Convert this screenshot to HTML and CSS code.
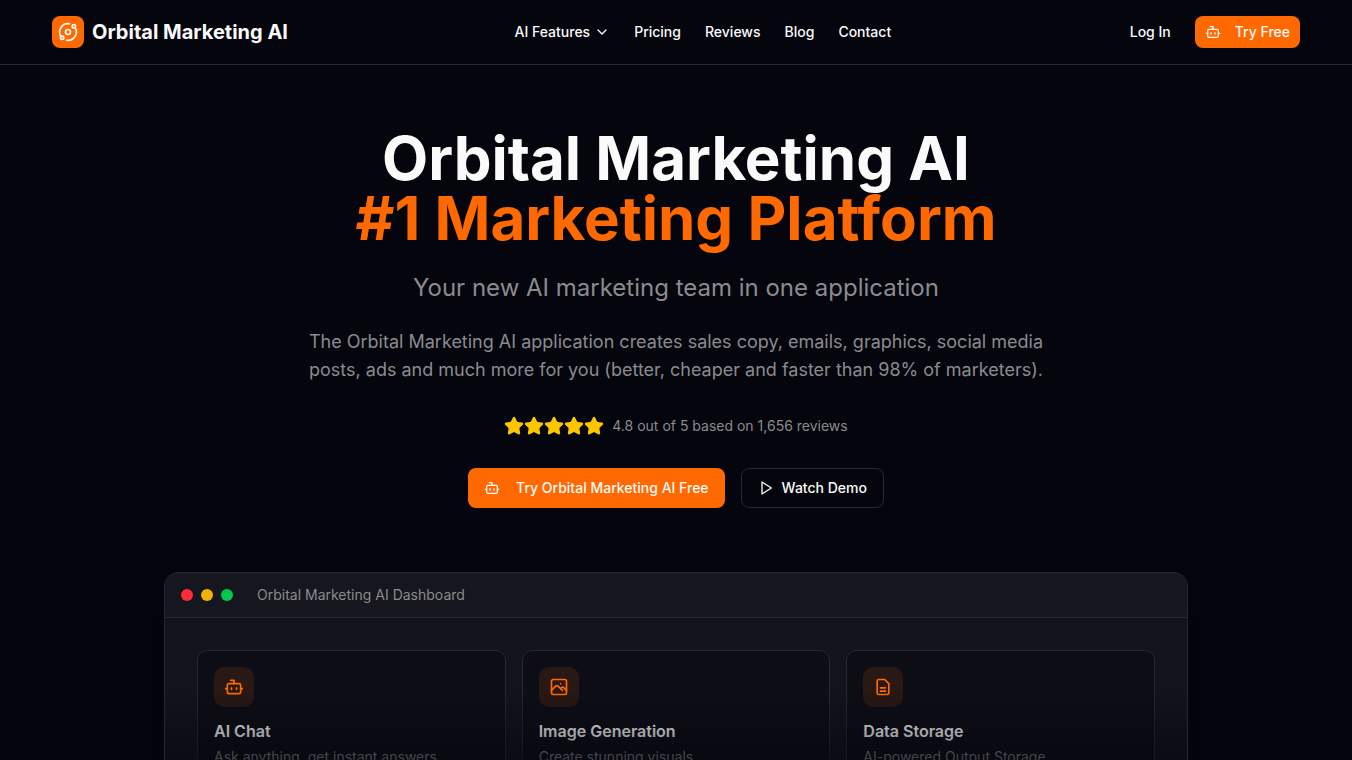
FILE: index.html
```
<!DOCTYPE html>
<html lang="en">
<head>
    <meta charset="UTF-8">
    <meta name="viewport" content="width=device-width, initial-scale=1.0">
    <title>Orbital Marketing AI</title>
    <link rel="stylesheet" href="styles.css">
</head>
<body>
    <svg class="sprite" aria-hidden="true">
        <symbol id="icon-bot" viewBox="0 0 24 24">
            <path d="M12 8V4H8"/>
            <rect width="16" height="12" x="4" y="8" rx="2"/>
            <path d="M2 14h2M20 14h2M15 13v2M9 13v2"/>
        </symbol>
        <symbol id="icon-star" viewBox="0 0 24 24">
            <path d="M11.525 2.295a.53.53 0 0 1 .95 0l2.31 4.679a2.123 2.123 0 0 0 1.595 1.16l5.166.756a.53.53 0 0 1 .294.904l-3.736 3.638a2.123 2.123 0 0 0-.611 1.878l.882 5.14a.53.53 0 0 1-.771.56l-4.618-2.428a2.122 2.122 0 0 0-1.973 0L6.396 21.01a.53.53 0 0 1-.77-.56l.881-5.139a2.122 2.122 0 0 0-.611-1.879L2.16 9.795a.53.53 0 0 1 .294-.906l5.165-.755a2.122 2.122 0 0 0 1.597-1.16z"/>
        </symbol>
    </svg>

    <header class="header">
        <div class="header-inner">
            <a href="#" class="logo">
                <span class="logo-mark">
                    <svg class="icon icon-md" viewBox="0 0 24 24">
                        <path d="M20.341 6.484A10 10 0 0 1 10.266 21.85M3.659 17.516A10 10 0 0 1 13.74 2.152"/>
                        <circle cx="12" cy="12" r="3"/>
                        <circle cx="19" cy="5" r="2"/>
                        <circle cx="5" cy="19" r="2"/>
                    </svg>
                </span>
                Orbital Marketing AI
            </a>
            <nav class="nav">
                <button type="button" class="nav-link">
                    AI Features
                    <svg class="icon" viewBox="0 0 24 24"><path d="m6 9 6 6 6-6"/></svg>
                </button>
                <a href="#pricing" class="nav-link">Pricing</a>
                <a href="#reviews" class="nav-link">Reviews</a>
                <a href="#blog" class="nav-link">Blog</a>
                <a href="#contact" class="nav-link">Contact</a>
            </nav>
            <div class="header-actions">
                <a href="#login" class="nav-link nav-login">Log In</a>
                <a href="#signup" class="btn btn-primary btn-sm"><svg class="icon"><use href="#icon-bot"/></svg>Try Free</a>
            </div>
        </div>
    </header>

    <main class="hero">
        <h1 class="hero-title">Orbital Marketing AI <span class="accent">#1 Marketing Platform</span></h1>
        <p class="hero-subtitle">Your new AI marketing team in one application</p>
        <p class="hero-text">The Orbital Marketing AI application creates sales copy, emails, graphics, social media posts, ads and much more for you (better, cheaper and faster than 98% of marketers).</p>

        <div class="rating">
            <div class="stars">
                <svg class="star"><use href="#icon-star"/></svg>
                <svg class="star"><use href="#icon-star"/></svg>
                <svg class="star"><use href="#icon-star"/></svg>
                <svg class="star"><use href="#icon-star"/></svg>
                <svg class="star"><use href="#icon-star"/></svg>
            </div>
            <span>4.8 out of 5 based on 1,656 reviews</span>
        </div>

        <div class="hero-buttons">
            <a href="#signup" class="btn btn-primary"><svg class="icon"><use href="#icon-bot"/></svg>Try Orbital Marketing AI Free</a>
            <button type="button" class="btn btn-outline">
                <svg class="icon" viewBox="0 0 24 24"><path d="M6 3l14 9-14 9z"/></svg>
                Watch Demo
            </button>
        </div>

        <section class="dashboard">
            <div class="dashboard-bar">
                <div class="dots">
                    <span class="dot dot-red"></span>
                    <span class="dot dot-yellow"></span>
                    <span class="dot dot-green"></span>
                </div>
                <span>Orbital Marketing AI Dashboard</span>
            </div>
            <div class="cards">
                <article class="card">
                    <div class="card-icon"><svg class="icon icon-md"><use href="#icon-bot"/></svg></div>
                    <h3>AI Chat</h3>
                    <p>Ask anything, get instant answers</p>
                </article>
                <article class="card">
                    <div class="card-icon">
                        <svg class="icon icon-md" viewBox="0 0 24 24">
                            <rect width="18" height="18" x="3" y="3" rx="2"/>
                            <path d="M3 16l5-5c.9-.9 2.1-.9 3 0l5 5M14 14l1-1c.9-.9 2.1-.9 3 0l3 3M14 8h.01"/>
                        </svg>
                    </div>
                    <h3>Image Generation</h3>
                    <p>Create stunning visuals</p>
                </article>
                <article class="card">
                    <div class="card-icon">
                        <svg class="icon icon-md" viewBox="0 0 24 24">
                            <path d="M14 3H7a2 2 0 0 0-2 2v14a2 2 0 0 0 2 2h10a2 2 0 0 0 2-2V8zM9 13h6M9 17h6"/>
                        </svg>
                    </div>
                    <h3>Data Storage</h3>
                    <p>AI-powered Output Storage</p>
                </article>
            </div>
        </section>
    </main>
</body>
</html>
```
FILE: styles.css
```
* {
    box-sizing: border-box;
    margin: 0;
    padding: 0;
}
html {
    scrollbar-width: none;
}
body {
    font-family: Inter, "Liberation Sans", sans-serif;
    font-size: 14px;
    line-height: 20px;
    background-color: #04050d;
    color: #fafafa;
}
a {
    color: inherit;
    text-decoration: none;
}
button {
    font: inherit;
    color: inherit;
    background: none;
    border: none;
    cursor: pointer;
}

/* Icons */
.sprite {
    position: absolute;
    width: 0;
    height: 0;
}
.icon {
    width: 16px;
    height: 16px;
    flex-shrink: 0;
    fill: none;
    stroke: currentColor;
    stroke-width: 2;
    stroke-linecap: round;
    stroke-linejoin: round;
}
.icon-md {
    width: 20px;
    height: 20px;
}

/* Header */
.header {
    box-shadow: 0 1px 0 #282930;
}
.header-inner {
    display: flex;
    align-items: center;
    justify-content: space-between;
    max-width: 1280px;
    height: 64px;
    margin: 0 auto;
    padding: 0 16px;
}
.logo {
    display: flex;
    align-items: center;
    gap: 8px;
    font-size: 20px;
    font-weight: 700;
    line-height: 28px;
}
.logo-mark {
    display: flex;
    align-items: center;
    justify-content: center;
    width: 32px;
    height: 32px;
    border-radius: 8px;
    background-color: #ff6900;
}
.nav {
    display: flex;
    gap: 24px;
}
.nav-link {
    display: flex;
    align-items: center;
    gap: 4px;
    font-weight: 500;
}
.nav-login {
    padding: 0 12px;
}
.header-actions {
    display: flex;
    align-items: center;
    gap: 12px;
}

/* Buttons */
.btn {
    display: flex;
    align-items: center;
    gap: 16px;
    height: 40px;
    padding: 0 16px;
    border-radius: 8px;
    font-weight: 500;
}
.btn-sm {
    gap: 14px;
    height: 32px;
    padding: 0 10px;
}
.btn-primary {
    background-color: #ff6900;
}
.btn-outline {
    gap: 8px;
    border: 1px solid #282930;
}

/* Hero */
.hero {
    display: flex;
    flex-direction: column;
    align-items: center;
    padding: 64px 16px;
    text-align: center;
}
.hero-title {
    font-size: 60px;
    font-weight: 700;
    line-height: 60px;
}
.hero-title .accent {
    display: block;
    color: #ff6900;
}
.hero-subtitle {
    margin-top: 24px;
    font-size: 24px;
    line-height: 32px;
    color: #8b8b8d;
}
.hero-text {
    max-width: 768px;
    margin-top: 24px;
    font-size: 18px;
    line-height: 28px;
    color: #8b8b8d;
}
.rating {
    display: flex;
    align-items: center;
    gap: 8px;
    margin-top: 32px;
    color: #8b8b8d;
}
.stars {
    display: flex;
}
.star {
    width: 20px;
    height: 20px;
    fill: #fdc700;
    stroke: #fdc700;
    stroke-width: 2;
    stroke-linejoin: round;
}
.hero-buttons {
    display: flex;
    gap: 16px;
    margin-top: 32px;
}

/* Dashboard preview */
.dashboard {
    position: relative;
    width: 100%;
    max-width: 1024px;
    margin-top: 64px;
    border: 1px solid #282930;
    border-radius: 14px;
    overflow: hidden;
    background-color: #12131b;
    box-shadow: 0 25px 50px -12px rgba(0, 0, 0, 0.5);
    text-align: left;
}
.dashboard::after {
    content: "";
    position: absolute;
    inset: 0;
    background: linear-gradient(to top, #04050d, transparent 52%);
}
.dashboard-bar {
    display: flex;
    align-items: center;
    gap: 24px;
    padding: 12px 16px;
    border-bottom: 1px solid #282930;
    background-color: #15161e;
    color: #8b8b8d;
}
.dots {
    display: flex;
    gap: 8px;
}
.dot {
    width: 12px;
    height: 12px;
    border-radius: 50%;
}
.dot-red {
    background-color: #fb2c36;
}
.dot-yellow {
    background-color: #f0b100;
}
.dot-green {
    background-color: #00c950;
}
.cards {
    display: grid;
    grid-template-columns: repeat(3, 1fr);
    gap: 16px;
    padding: 32px;
}
.card {
    padding: 16px;
    border: 1px solid #282930;
    border-radius: 10px;
    background-color: #0c0d15;
}
.card-icon {
    display: flex;
    align-items: center;
    justify-content: center;
    width: 40px;
    height: 40px;
    margin-bottom: 12px;
    border-radius: 10px;
    background-color: #291814;
    color: #ff6900;
}
.card h3 {
    font-size: 16px;
    font-weight: 600;
    line-height: 24px;
}
.card p {
    margin-top: 4px;
    color: #8b8b8d;
}
```
